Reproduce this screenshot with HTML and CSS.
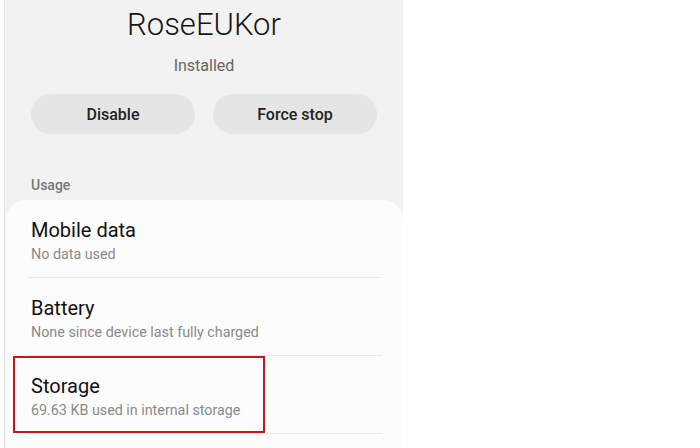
FILE: index.html
```html
<!DOCTYPE html>
<html>
<head>
<meta charset="utf-8">
<link rel="stylesheet" href="styles.css">
</head>
<body>
<div class="panel">
  <h1 class="app-name">RoseEUKor</h1>
  <div class="status">Installed</div>
  <div class="actions">
    <button class="btn">Disable</button>
    <button class="btn">Force stop</button>
  </div>
  <div class="section-label">Usage</div>
  <div class="card">
    <div class="row">
      <div class="row-title">Mobile data</div>
      <div class="row-sub">No data used</div>
    </div>
    <div class="row">
      <div class="row-title">Battery</div>
      <div class="row-sub">None since device last fully charged</div>
    </div>
    <div class="row row-highlight">
      <div class="row-title">Storage</div>
      <div class="row-sub">69.63 KB used in internal storage</div>
      <div class="highlight-box"></div>
    </div>
  </div>
</div>
</body>
</html>
```
FILE: styles.css
```css
html, body {
  margin: 0;
  padding: 0;
  background: #ffffff;
  height: 448px;
  overflow: hidden;
}
body {
  font-family: Roboto, "Noto Sans", "Liberation Sans", sans-serif;
}
.panel {
  margin-left: 4px;
  width: 398px;
  height: 448px;
  background: #f2f2f2;
  border-left: 1px solid #e6e6e6;
  padding-top: 5px;
  box-sizing: content-box;
}
.app-name {
  margin: 0;
  font-size: 31px;
  line-height: 40px;
  font-weight: 300;
  color: #161616;
  text-align: center;
}
.status {
  margin-top: 11px;
  font-size: 16px;
  line-height: 20px;
  color: #666666;
  text-align: center;
}
.actions {
  display: flex;
  gap: 18px;
  margin: 18px 26px 0 26px;
}
.btn {
  flex: 1;
  height: 40px;
  border: none;
  border-radius: 20px;
  background: #e5e5e5;
  font-family: inherit;
  font-size: 16px;
  font-weight: 500;
  color: #222222;
  padding: 0;
}
.section-label {
  margin: 42px 0 0 26px;
  font-size: 14px;
  line-height: 18px;
  font-weight: 500;
  color: #777777;
}
.card {
  margin: 6px 0 0 1px;
  background: #fcfcfc;
  border-radius: 20px 20px 0 0;
  padding-bottom: 20px;
}
.row {
  position: relative;
  margin: 0 21px;
  padding: 18px 0 13px 4px;
  border-bottom: 1px solid #e8e8e8;
}
.row-title {
  font-size: 20px;
  line-height: 24px;
  color: #111111;
}
.row-sub {
  margin-top: 2px;
  font-size: 14.3px;
  line-height: 20px;
  color: #8a8a8a;
}
.highlight-box {
  position: absolute;
  left: -14px;
  top: 0;
  bottom: 0;
  width: 248px;
  border: 2px solid #c8161d;
}
```
